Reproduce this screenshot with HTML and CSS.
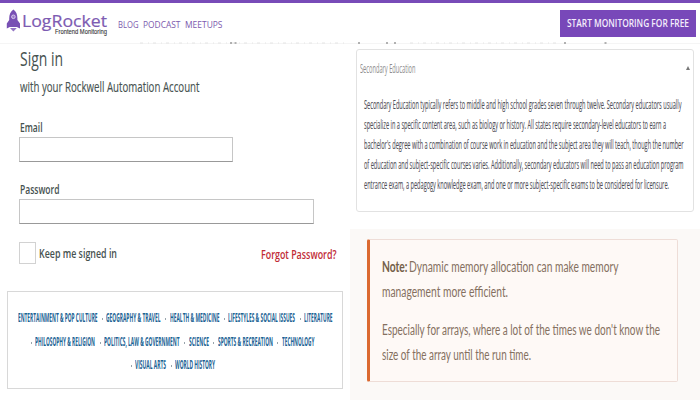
FILE: index.html
```
<!DOCTYPE html>
<html lang="en">
<head>
<meta charset="utf-8">
<title>LogRocket Blog</title>
<link rel="stylesheet" href="styles.css">
</head>
<body>
<header class="topbar">
  <svg class="rocket" width="15" height="24" viewBox="0 0 15 24">
    <path d="M7.4 0.5C4.5 2.6 3.2 5.5 3.2 9.5V11L0.8 14.5V19.5L3.8 18H10.8L14 19.5V14.5L11.4 11V9.5C11.4 5.5 10.3 2.6 7.4 0.5Z" fill="#7850b4"/>
    <path d="M4 19H10.8L9.4 20.4L7.4 22.4L5.4 20.4Z" fill="#9375c4"/>
    <circle cx="7.4" cy="7.8" r="1.8" fill="#9a7bca" stroke="#e0d3f0" stroke-width=".9"/>
  </svg>
  <div class="brand">
    <div class="brand-name"><span class="fit" data-width="85">LogRocket</span></div>
    <div class="brand-sub"><span class="fit" data-width="52">Frontend Monitoring</span></div>
  </div>
  <nav class="links">
    <a class="fit" data-width="20.5">BLOG</a>
    <a class="fit" data-width="37.5">PODCAST</a>
    <a class="fit" data-width="37.5">MEETUPS</a>
  </nav>
  <a class="cta"><span class="fit" data-width="122">START MONITORING FOR FREE</span></a>
  <svg class="clipped" width="700" height="2" viewBox="0 0 700 2">
    <path d="M140 1H345M410 1H560" stroke="#e4e4e4" stroke-width="1" stroke-dasharray="3 5 1 4"/>
    <path d="M230 1h2M234.500 1h2M358 1h2M386 1h2M394 1h2M564 1h2M604.500 1h2" stroke="#999" stroke-width="1.500"/>
  </svg>
</header>
<main class="columns">
  <section class="left">
    <form class="signin">
      <h1><span class="fit" data-width="43">Sign in</span></h1>
      <p class="subtitle"><span class="fit" data-width="179.5">with your Rockwell Automation Account</span></p>
      <label class="label email-label"><span class="fit" data-width="22.5">Email</span></label>
      <div class="input email"></div>
      <label class="label password-label"><span class="fit" data-width="39.5">Password</span></label>
      <div class="input password"></div>
      <div class="options">
        <span class="checkbox"></span>
        <span class="keep"><span class="fit" data-width="78">Keep me signed in</span></span>
        <a class="forgot"><span class="fit" data-width="75.5">Forgot Password?</span></a>
      </div>
    </form>
    <nav class="topics">
      <div class="topic-row">
        <a class="fit" data-width="79.5">ENTERTAINMENT &amp; POP CULTURE</a><i></i><a class="fit" data-width="54.5">GEOGRAPHY &amp; TRAVEL</a><i></i><a class="fit" data-width="49.5">HEALTH &amp; MEDICINE</a><i></i><a class="fit" data-width="67">LIFESTYLES &amp; SOCIAL ISSUES</a><i></i><a class="fit" data-width="28.5">LITERATURE</a>
      </div>
      <div class="topic-row second">
        <i></i><a class="fit" data-width="60">PHILOSOPHY &amp; RELIGION</a><i></i><a class="fit" data-width="75.5">POLITICS, LAW &amp; GOVERNMENT</a><i></i><a class="fit" data-width="20">SCIENCE</a><i></i><a class="fit" data-width="55">SPORTS &amp; RECREATION</a><i></i><a class="fit" data-width="32.5">TECHNOLOGY</a>
      </div>
      <div class="topic-row third">
        <i></i><a class="fit" data-width="31">VISUAL ARTS</a><i></i><a class="fit" data-width="40">WORLD HISTORY</a>
      </div>
    </nav>
  </section>
  <section class="right">
    <article class="card">
      <div class="card-head"><span class="fit" data-width="55.5">Secondary Education</span><span class="caret"></span></div>
      <div class="card-body">
        <div><span class="fit" data-width="317.5">Secondary Education typically refers to middle and high school grades seven through twelve. Secondary educators usually</span></div>
        <div><span class="fit" data-width="302">specialize in a specific content area, such as biology or history. All states require secondary-level educators to earn a</span></div>
        <div><span class="fit" data-width="319.5">bachelor's degree with a combination of course work in education and the subject area they will teach, though the number</span></div>
        <div><span class="fit" data-width="319.5">of education and subject-specific courses varies. Additionally, secondary educators will need to pass an education program</span></div>
        <div><span class="fit" data-width="305">entrance exam, a pedagogy knowledge exam, and one or more subject-specific exams to be considered for licensure.</span></div>
      </div>
    </article>
    <div class="note-area">
      <aside class="note">
        <p>
          <span class="row"><strong class="fit" data-width="25.5">Note:</strong><span class="fit" data-width="209.500">Dynamic memory allocation can make memory</span></span>
          <span class="row"><span class="fit" data-width="126">management more efficient.</span></span>
        </p>
        <p>
          <span class="row"><span class="fit" data-width="278">Especially for arrays, where a lot of the times we don't know the</span></span>
          <span class="row"><span class="fit" data-width="149">size of the array until the run time.</span></span>
        </p>
      </aside>
    </div>
  </section>
</main>
<script src="fit.js"></script>
</body>
</html>
```
FILE: styles.css
```
* { box-sizing: border-box; }
body {
  margin: 0;
  width: 700px;
  height: 400px;
  overflow: hidden;
  background: #fff;
  font-family: "Open Sans", "Noto Sans", sans-serif;
}
.fit {
  display: inline-block;
  flex: none;
  white-space: nowrap;
  transform-origin: 0 50%;
}
.topbar {
  position: relative;
  height: 44px;
  border-top: 3px solid #784bb8;
  border-bottom: 1px solid #f5f5f5;
  display: flex;
  align-items: flex-start;
  padding-left: 6px;
}
.clipped { position: absolute; left: 0; bottom: -1px; }
.rocket { margin-top: 6px; flex: none; }
.brand { width: 86px; margin: 10px 10px 0 1px; }
.brand-name {
  font-size: 16.5px;
  line-height: 16px;
  height: 15px;
  color: #7d5bb2;
  -webkit-text-stroke: .2px #7d5bb2;
}
.brand-name .fit { vertical-align: top; }
.brand-sub {
  padding-left: 33px;
  font: 6.5px/7px "Liberation Sans", sans-serif;
  color: #333;
  -webkit-text-stroke: .1px #333;
  height: 7px;
  display: flex;
}
.links {
  display: flex;
  gap: 4.500px;
  margin-top: 15px;
  font-size: 9.6px;
  line-height: 13px;
  color: #7c5aae;
}
.cta {
  margin: 7px 4px 0 auto;
  width: 136px;
  height: 27px;
  padding-left: 7px;
  background: #7848b9;
  color: #f4edfb;
  font-size: 10px;
  font-weight: 600;
  line-height: 27px;
}
.columns { display: flex; height: 356px; }
.left { width: 350px; }
.signin { height: 247px; padding: 2px 0 0 19px; color: #465250; }
.signin h1 { margin: 0; padding-left: .5px; font-size: 20px; font-weight: 400; line-height: 25px; height: 24px; }
.subtitle { margin: 7px 0 0; padding-left: .5px; font-size: 14px; line-height: 20px; height: 20px; -webkit-text-stroke: .15px; }
.label { display: block; padding-left: .5px; font-size: 11.8px; font-weight: 600; line-height: 16px; height: 16px; }
.email-label { margin-top: 22px; }
.password-label { margin-top: 19px; }
.input { height: 25px; border: 1px solid #c6c6c6; border-bottom-color: #999; }
.email { width: 214px; margin-top: 2px; }
.password { width: 295px; margin-top: 2px; }
.options { display: flex; align-items: center; height: 22px; margin-top: 18px; font-size: 12.3px; font-weight: 600; line-height: 16px; }
.checkbox { width: 17px; height: 22px; border: 1px solid #d2d2d2; margin-right: 3px; }
.keep { width: 221.5px; padding-top: 1px; }
.forgot { color: #c12c36; padding-top: 3px; }
.topics {
  width: 336px;
  height: 98px;
  margin-left: 7px;
  padding: 14px 0 0 9.5px;
  border: 1px solid #d8d8d8;
  color: #1b6394;
  font-size: 12.6px;
  font-weight: 700;
}
.topic-row { display: flex; height: 23.7px; line-height: 23.7px; }
.topic-row.second { padding-left: 8.5px; }
.topic-row.third { padding-left: 108.5px; }
.topic-row i { flex: none; width: 9.1px; display: flex; align-items: center; padding: 2px 0 0 4.5px; }
.topic-row i::before { content: ""; width: 1px; height: 2px; background: #98a4ac; }
.right { width: 350px; }
.card {
  width: 338px;
  height: 163px;
  margin: 5px 0 0 6px;
  border: 1px solid #e2e2e2;
  border-radius: 3px;
}
.card-head {
  display: flex;
  align-items: center;
  height: 36px;
  padding-left: 3px;
  font-size: 12.5px;
  color: #8c8c8c;
}
.caret {
  margin-left: auto;
  margin-right: 3px;
  border: 2px solid transparent;
  border-bottom: 4px solid #777;
  border-top: 0;
}
.card-body {
  padding: 8px 0 0 7px;
  font-size: 13.2px;
  line-height: 20px;
  color: #505058;
  -webkit-text-stroke: .12px;
}
.card-body div { height: 20px; }
.note-area { height: 171px; margin-top: 17px; padding: 10px 0 0 17px; background: #fbf9f7; }
.note {
  width: 311px;
  height: 143px;
  padding: 13.5px 0 0 12px;
  border: 1px solid #eeddd7;
  border-left: 3px solid #db6a31;
  border-radius: 2px;
  background: #fef9f6;
  color: #85705f;
  font: 14.6px/25px Lato, sans-serif;
}
.note p { margin: 0 0 13px; }
.row { display: flex; gap: 1.5px; height: 25px; }
.note strong { font-weight: 700; color: #746049; }
```
FILE: fit.js
```
// Condense each label horizontally to its own column width.
document.querySelectorAll(".fit").forEach(function (el) {
  var natural = el.getBoundingClientRect().width;
  var width = parseFloat(el.dataset.width);
  el.style.transform = "scaleX(" + width / natural + ")";
  el.style.marginRight = (width - natural) + "px";
});
```
